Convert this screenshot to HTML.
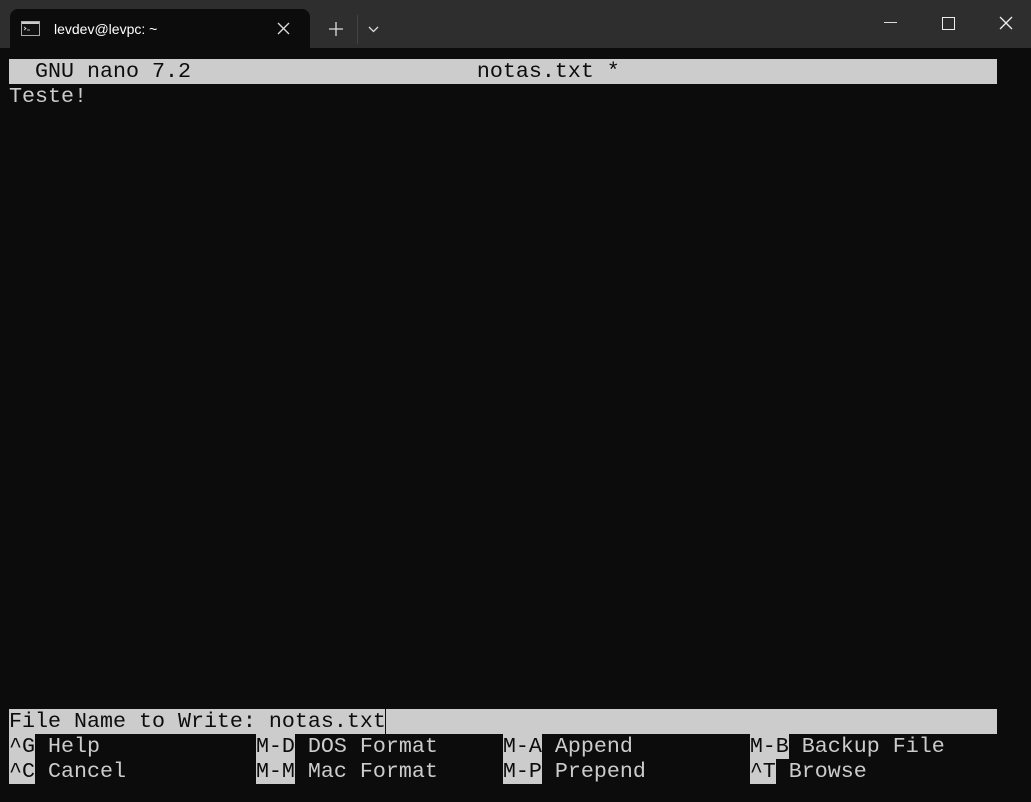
<!DOCTYPE html>
<html><head><style>
html,body{margin:0;padding:0;}
body{width:1031px;height:802px;background:#0c0c0c;position:relative;overflow:hidden;font-family:"Liberation Sans",sans-serif;}
#tb{position:absolute;left:0;top:0;width:1031px;height:48px;background:#2e2e2e;}
#tab{position:absolute;left:10px;top:9px;width:300px;height:39px;background:#0c0c0c;border-radius:8px 8px 0 0;}
#tab .t{position:absolute;left:44px;top:12px;color:#fff;font-size:14px;}
.term{position:absolute;font-family:"Liberation Mono",monospace;font-size:21.67px;line-height:25px;white-space:pre;color:#cccccc;}
.hl{background:#cccccc;color:#0c0c0c;}
</style></head><body>
<div id="tb">
<div id="tab">
<svg style="position:absolute;left:11px;top:12px" width="19" height="15"><rect x="0.5" y="0.5" width="18" height="14" fill="#111" stroke="#aaa"/><rect x="1" y="1" width="17" height="2" fill="#ccc"/><path d="M3 6l2 1.5-2 1.5M6 9h3" stroke="#ddd" stroke-width="0.8" fill="none"/></svg>
<div class="t">levdev@levpc: ~</div>
<svg style="position:absolute;left:267px;top:13px" width="13" height="13"><path d="M1 1L12 12M12 1L1 12" stroke="#ddd" stroke-width="1.3"/></svg>
</div>
<svg style="position:absolute;left:329px;top:22px" width="14" height="14"><path d="M7 0V14M0 7H14" stroke="#ddd" stroke-width="1.3"/></svg>
<div style="position:absolute;left:357px;top:15px;width:1px;height:29px;background:#444"></div>
<svg style="position:absolute;left:368px;top:26px" width="11" height="7"><path d="M1 1L5.5 5.5L10 1" stroke="#ddd" stroke-width="1.3" fill="none"/></svg>
<div style="position:absolute;left:884px;top:22px;width:13px;height:1px;background:#ddd"></div>
<div style="position:absolute;left:942px;top:17px;width:11px;height:11px;border:1px solid #eee"></div>
<svg style="position:absolute;left:999px;top:16px" width="14" height="14"><path d="M1 1L13 13M13 1L1 13" stroke="#eee" stroke-width="1.3"/></svg>
</div>
<div class="term" style="left:9px;top:59px;"><span class="hl">  GNU nano 7.2                      notas.txt *                             </span>
Teste!</div>
<div class="term" style="left:9px;top:709px;"><span class="hl">File Name to Write: notas.txt</span><span style="border-left:1px solid #0c0c0c;margin-left:-1px"></span><span class="hl">                                               </span>
<span class="hl">^G</span> Help            <span class="hl">M-D</span> DOS Format     <span class="hl">M-A</span> Append         <span class="hl">M-B</span> Backup File
<span class="hl">^C</span> Cancel          <span class="hl">M-M</span> Mac Format     <span class="hl">M-P</span> Prepend        <span class="hl">^T</span> Browse</div>
</body></html>
